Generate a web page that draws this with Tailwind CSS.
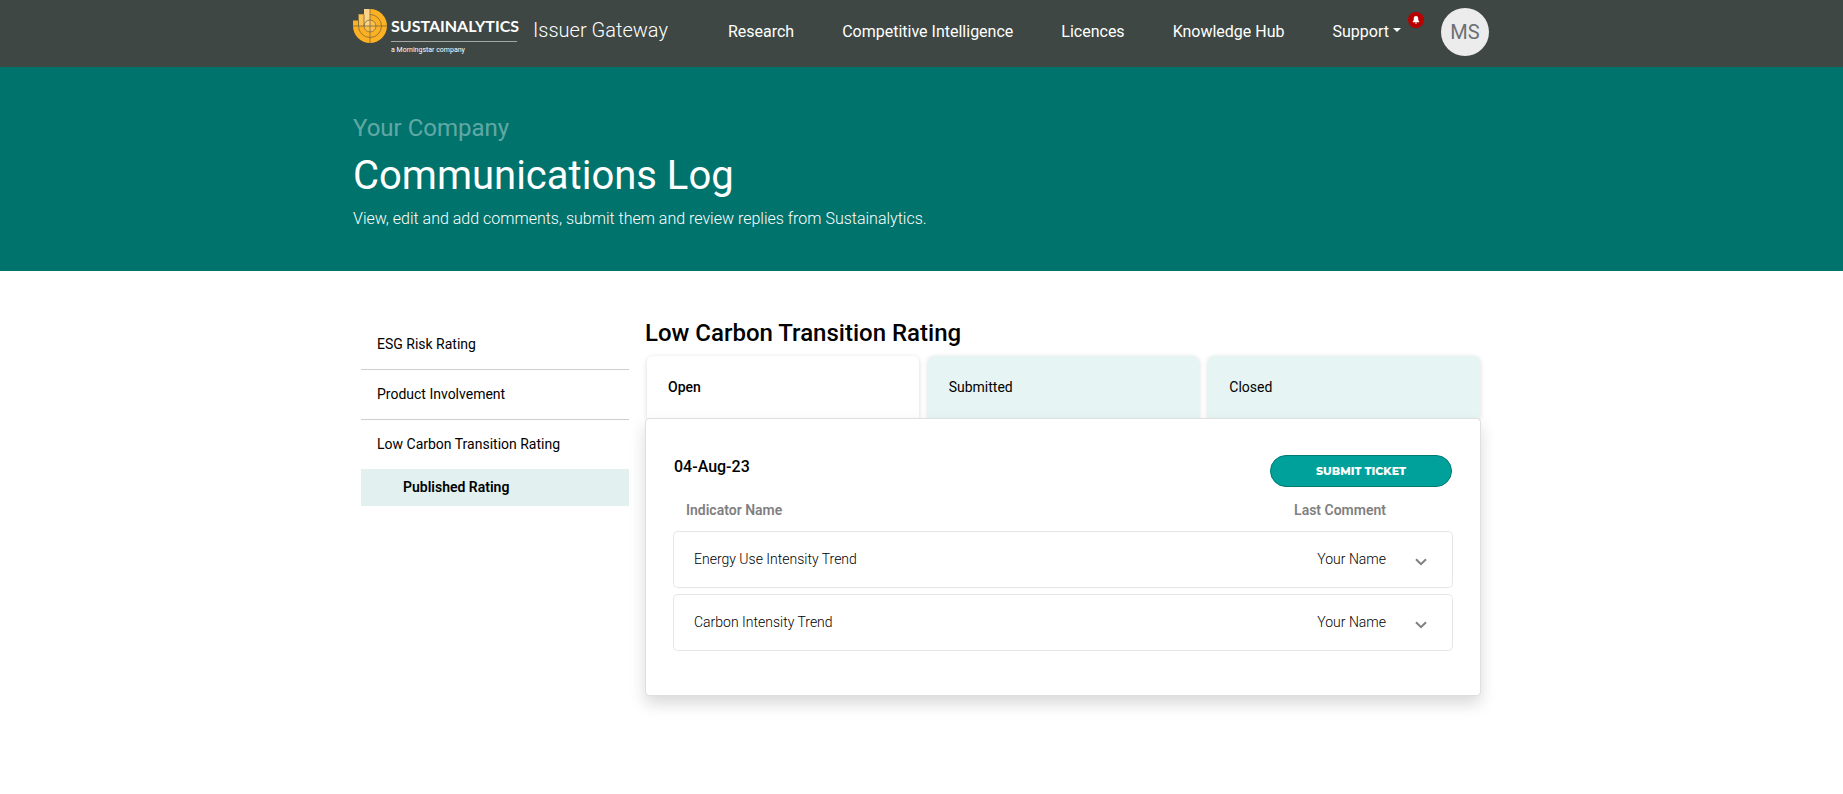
<!DOCTYPE html>
<html lang="en">
<head>
<meta charset="utf-8">
<meta name="viewport" content="width=device-width, initial-scale=1">
<title>Communications Log - Issuer Gateway</title>
<script src="https://cdn.jsdelivr.net/npm/@tailwindcss/browser@4"></script>
</head>
<body class="min-h-screen bg-white font-[Roboto,sans-serif] text-black">

<header class="bg-[#3e4743] text-white">
  <div class="mx-auto flex h-[67px] max-w-[1137px] items-start pt-2 pr-px">
    <a href="#" class="flex shrink-0 gap-1" aria-label="Sustainalytics home">
      <svg class="mt-px size-[34px]" viewBox="0 0 34 34" aria-hidden="true">
        <path d="M17 0A17 17 0 1 1 0 17V11.500H5.500V5.500H11V0Z" fill="#fdb022"/>
        <path d="M5.500 5.500H11V17H5.500Z" fill="#fdc14d"/>
        <path d="M11 0H17V17H11Z" fill="#fed387"/>
        <circle cx="17" cy="17" r="6.500" fill="#fdbf4c"/>
        <path d="M11 11H17V17H11Z" fill="#fed387"/>
        <g fill="none" stroke="#7b693b" stroke-width=".8">
          <circle cx="17" cy="17" r="6"/>
          <path d="M17 5.500A11.500 11.500 0 1 1 5.500 17V5.500M0 17H34M17 0V34M11 5.500V17M5.500 11.500V17"/>
        </g>
      </svg>
      <span class="flex w-[126px] flex-col pt-[6px]">
        <span class="font-[Lato,sans-serif] text-[16px] leading-6 font-bold">SUSTAINALYTICS</span>
        <span class="mt-[3px] border-t border-[#a3a8a5] pt-1 text-[7px] leading-2">a Morningstar company</span>
      </span>
    </a>
    <span class="ml-4 pt-[10px] text-[20px] leading-6 font-light whitespace-nowrap">Issuer Gateway</span>
    <nav class="ml-auto flex gap-12 pt-3 text-[16px] leading-6 whitespace-nowrap">
      <a href="#">Research</a>
      <a href="#">Competitive Intelligence</a>
      <a href="#">Licences</a>
      <a href="#">Knowledge Hub</a>
      <button type="button" class="flex items-center gap-1">Support
        <svg class="mb-1 h-1 w-2" viewBox="0 0 8 4" fill="currentColor" aria-hidden="true"><path d="M0 0H8L4 4Z"/></svg>
      </button>
    </nav>
    <button type="button" aria-label="Notifications" class="mt-1 ml-[7px] flex size-4 shrink-0 items-center justify-center rounded-full bg-[#b90000]">
      <svg class="size-2" viewBox="0 0 8 8" fill="#fff" aria-hidden="true"><path d="M4 0C2.300 0 1.800 1.200 1.800 2.600C1.800 4.500 1.400 5 .7 5.700V6.200H7.300V5.700C6.600 5 6.200 4.500 6.200 2.600C6.200 1.200 5.700 0 4 0ZM3 6.800A1 1 0 0 0 5 6.800Z"/></svg>
    </button>
    <button type="button" aria-label="Account MS" class="ml-[17px] size-12 shrink-0 rounded-full bg-[#ebeceb] text-[20px] text-[#6b6f75]">MS</button>
  </div>
</header>

<section class="bg-[#00736d] text-white">
  <div class="mx-auto max-w-[1137px] pt-[47px] pb-[39px]">
    <p class="text-[24px] leading-7 text-white/40">Your Company</p>
    <h1 class="mt-[10px] text-[40px] leading-12">Communications Log</h1>
    <p class="mt-[6px] text-[16px] leading-[26px] font-light">View, edit and add comments, submit them and review replies from Sustainalytics.</p>
  </div>
</section>

<div class="mx-auto flex max-w-[1137px] gap-4 pt-12 pr-[9px] pl-2">
  <aside class="w-[268px] shrink-0 pt-px">
    <ul class="text-[14px] leading-[49px]">
      <li class="border-b border-[#cdcfd3]"><a href="#" class="block pl-4">ESG Risk Rating</a></li>
      <li class="border-b border-[#cdcfd3]"><a href="#" class="block pl-4">Product Involvement</a></li>
      <li><a href="#" class="block pl-4">Low Carbon Transition Rating</a>
        <ul><li><a href="#" aria-current="page" class="block bg-[#e2f1ef] pl-[42px] leading-[37px] font-semibold">Published Rating</a></li></ul>
      </li>
    </ul>
  </aside>

  <main class="min-w-0 flex-1">
    <h2 class="text-[24px] leading-7 font-medium">Low Carbon Transition Rating</h2>
    <div role="tablist" class="mt-[9px] grid grid-cols-3 gap-[9px] pr-px pl-[2px] text-[14px]">
      <button type="button" role="tab" aria-selected="true" class="h-[62px] rounded-t-md bg-white pl-[21px] text-left font-medium shadow-[0_1px_5px_rgba(0,0,0,0.15)]">Open</button>
      <button type="button" role="tab" aria-selected="false" class="h-[62px] rounded-t-md bg-[#e6f4f3] pl-[21px] text-left shadow-[0_1px_5px_rgba(0,0,0,0.15)]">Submitted</button>
      <button type="button" role="tab" aria-selected="false" class="h-[62px] rounded-t-md bg-[#e6f4f3] pl-[21px] text-left shadow-[0_1px_5px_rgba(0,0,0,0.15)]">Closed</button>
    </div>
    <section class="relative rounded-sm border border-[#dedfdf] bg-white px-[27px] pt-9 pb-[38px] shadow-[0_8px_16px_rgba(0,0,0,0.15)]">
      <div class="flex items-start justify-between">
        <h3 class="pl-px text-[16px] leading-6 font-medium">04-Aug-23</h3>
        <button type="button" class="mr-px h-8 w-[182px] rounded-full border border-[#007a74] bg-[#00a19b] font-[Montserrat,Inter,sans-serif] text-[11px] font-extrabold text-white">SUBMIT TICKET</button>
      </div>
      <table class="mt-[2px] w-full border-separate border-spacing-x-0 border-spacing-y-[6px] text-[14px]">
        <thead>
          <tr class="h-[30px] text-[#7f7f7f]">
            <th scope="col" class="p-0 pl-[13px] text-left font-semibold">Indicator Name</th>
            <th scope="col" class="p-0 text-right font-semibold">Last Comment</th>
            <td class="w-[67px] p-0"></td>
          </tr>
        </thead>
        <tbody class="font-light">
          <tr class="h-[57px]">
            <td class="rounded-l-[5px] border-y border-l border-[#e5e6e6] p-0 pl-5">Energy Use Intensity Trend</td>
            <td class="border-y border-[#e5e6e6] p-0 text-right">Your Name</td>
            <td class="rounded-r-[5px] border-y border-r border-[#e5e6e6] p-0 pt-1">
              <button type="button" aria-label="Expand Energy Use Intensity Trend" class="ml-[29px] block">
                <svg class="h-2 w-3" viewBox="0 0 12 8" fill="none" stroke="#808080" stroke-width="2" aria-hidden="true"><path d="M1 1.200L6 6.200L11 1.200"/></svg>
              </button>
            </td>
          </tr>
          <tr class="h-[57px]">
            <td class="rounded-l-[5px] border-y border-l border-[#e5e6e6] p-0 pl-5">Carbon Intensity Trend</td>
            <td class="border-y border-[#e5e6e6] p-0 text-right">Your Name</td>
            <td class="rounded-r-[5px] border-y border-r border-[#e5e6e6] p-0 pt-1">
              <button type="button" aria-label="Expand Carbon Intensity Trend" class="ml-[29px] block">
                <svg class="h-2 w-3" viewBox="0 0 12 8" fill="none" stroke="#808080" stroke-width="2" aria-hidden="true"><path d="M1 1.200L6 6.200L11 1.200"/></svg>
              </button>
            </td>
          </tr>
        </tbody>
      </table>
    </section>
  </main>
</div>
</body>
</html>
